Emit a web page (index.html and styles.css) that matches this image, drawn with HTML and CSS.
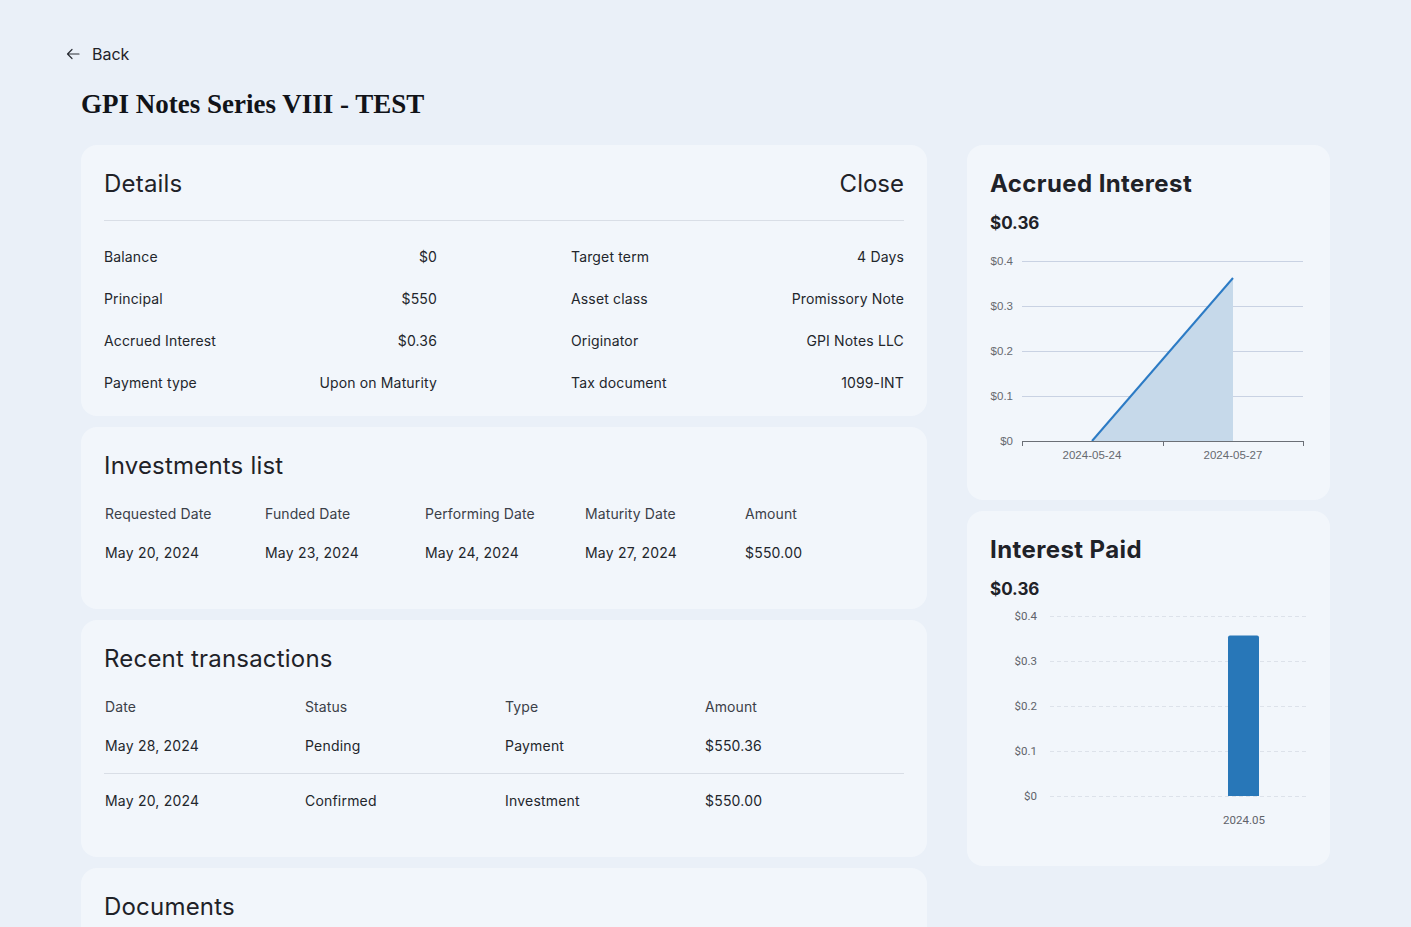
FILE: index.html
```html
<!DOCTYPE html>
<html>
<head>
<meta charset="utf-8">
<link rel="stylesheet" href="styles.css">
</head>
<body>
<div class="page">
  <a class="back" href="#">
    <svg class="back-icon" width="14" height="12" viewBox="0 0 14 12"><path d="M13 6H1.5M6 1.5L1.5 6L6 10.5" fill="none" stroke="#2a2e35" stroke-width="1.2" stroke-linecap="round" stroke-linejoin="round"/></svg>
    <span>Back</span>
  </a>
  <h1 class="title">GPI Notes Series VIII - TEST</h1>
  <div class="layout">
    <div class="main-col">
      <section class="card details">
        <div class="details-head">
          <h2 class="card-title">Details</h2>
          <span class="close">Close</span>
        </div>
        <div class="details-grid">
          <div class="kv"><span>Balance</span><span>$0</span></div>
          <div class="kv"><span>Target term</span><span>4 Days</span></div>
          <div class="kv"><span>Principal</span><span>$550</span></div>
          <div class="kv"><span>Asset class</span><span>Promissory Note</span></div>
          <div class="kv"><span>Accrued Interest</span><span>$0.36</span></div>
          <div class="kv"><span>Originator</span><span>GPI Notes LLC</span></div>
          <div class="kv"><span>Payment type</span><span>Upon on Maturity</span></div>
          <div class="kv"><span>Tax document</span><span>1099-INT</span></div>
        </div>
      </section>

      <section class="card list">
        <h2 class="card-title">Investments list</h2>
        <div class="table inv">
          <div class="tr th"><span>Requested Date</span><span>Funded Date</span><span>Performing Date</span><span>Maturity Date</span><span>Amount</span></div>
          <div class="tr"><span>May 20, 2024</span><span>May 23, 2024</span><span>May 24, 2024</span><span>May 27, 2024</span><span>$550.00</span></div>
        </div>
      </section>

      <section class="card list">
        <h2 class="card-title">Recent transactions</h2>
        <div class="table tx">
          <div class="tr th"><span>Date</span><span>Status</span><span>Type</span><span>Amount</span></div>
          <div class="tr"><span>May 28, 2024</span><span>Pending</span><span>Payment</span><span>$550.36</span></div>
          <div class="tr sep"><span>May 20, 2024</span><span>Confirmed</span><span>Investment</span><span>$550.00</span></div>
        </div>
      </section>

      <section class="card list">
        <h2 class="card-title">Documents</h2>
      </section>
    </div>

    <div class="side-col">
      <section class="card chart-card">
        <h3 class="chart-title">Accrued Interest</h3>
        <div class="chart-value">$0.36</div>
        <svg class="chart" width="317" height="229" viewBox="0 0 317 229">
          <g stroke="#c9d2e3" stroke-width="1">
            <line x1="32" y1="10.5" x2="313" y2="10.5"/>
            <line x1="32" y1="55.5" x2="313" y2="55.5"/>
            <line x1="32" y1="100.5" x2="313" y2="100.5"/>
            <line x1="32" y1="145.5" x2="313" y2="145.5"/>
          </g>
          <polygon points="102,190 243,27 243,190" fill="#c6d9ea"/>
          <line x1="102" y1="190" x2="243" y2="27" stroke="#2c7bc5" stroke-width="2"/>
          <g stroke="#6b6f76" stroke-width="1">
            <line x1="32" y1="190.5" x2="313" y2="190.5"/>
            <line x1="32.5" y1="190" x2="32.5" y2="195"/>
            <line x1="173.5" y1="190" x2="173.5" y2="195"/>
            <line x1="313.5" y1="190" x2="313.5" y2="195"/>
          </g>
          <g class="axis-l" text-anchor="end">
            <text x="23" y="14">$0.4</text>
            <text x="23" y="59">$0.3</text>
            <text x="23" y="104">$0.2</text>
            <text x="23" y="149">$0.1</text>
            <text x="23" y="194">$0</text>
          </g>
          <g class="axis-l" text-anchor="middle">
            <text x="102" y="208">2024-05-24</text>
            <text x="243" y="208">2024-05-27</text>
          </g>
        </svg>
      </section>

      <section class="card chart-card">
        <h3 class="chart-title">Interest Paid</h3>
        <div class="chart-value">$0.36</div>
        <svg class="chart" width="317" height="245" viewBox="0 0 317 245">
          <g stroke="#dde2ea" stroke-width="1" stroke-dasharray="4 3">
            <line x1="60" y1="15.5" x2="317" y2="15.5"/>
            <line x1="60" y1="60.5" x2="317" y2="60.5"/>
            <line x1="60" y1="105.5" x2="317" y2="105.5"/>
            <line x1="60" y1="150.5" x2="317" y2="150.5"/>
            <line x1="60" y1="195.5" x2="317" y2="195.5"/>
          </g>
          <path d="M238 195V36.5a2 2 0 0 1 2-2h27a2 2 0 0 1 2 2V195Z" fill="#2877b8"/>
          <g class="axis-r" text-anchor="end">
            <text x="47" y="19">$0.4</text>
            <text x="47" y="64">$0.3</text>
            <text x="47" y="109">$0.2</text>
            <text x="47" y="154">$0.1</text>
            <text x="47" y="199">$0</text>
          </g>
          <text class="axis-r" x="254" y="223" text-anchor="middle">2024.05</text>
        </svg>
      </section>
    </div>
  </div>
</div>
</body>
</html>
```

FILE: styles.css
```css
* { box-sizing: border-box; }
html, body { margin: 0; padding: 0; }
body {
  background: #eaf0f8;
  font-family: Inter, "Noto Sans", sans-serif;
  color: #1f2228;
  height: 927px;
  overflow: hidden;
}
.page {
  padding: 44px 0 0 81px;
}
.back {
  display: inline-flex;
  align-items: center;
  gap: 12px;
  margin-left: -15px;
  text-decoration: none;
  color: #1f2228;
  font-size: 16px;
  line-height: 20px;
}
.back-icon { display: block; }
.title {
  margin: 24px 0 0 0;
  font-family: "Liberation Serif", "DejaVu Serif", serif;
  font-weight: 700;
  font-size: 27px;
  line-height: 32px;
  letter-spacing: 0;
  color: #111318;
}
.layout {
  display: flex;
  gap: 40px;
  margin-top: 25px;
  align-items: flex-start;
}
.main-col {
  width: 846px;
  display: flex;
  flex-direction: column;
  gap: 11px;
}
.side-col {
  width: 363px;
  display: flex;
  flex-direction: column;
  gap: 11px;
}
.card {
  background: #f2f6fb;
  border-radius: 16px;
  padding: 23px;
}
.card-title {
  margin: 0;
  font-size: 24px;
  font-weight: 400;
  line-height: 32px;
  letter-spacing: 0.2px;
  color: #1f2228;
}
.details-head {
  display: flex;
  justify-content: space-between;
  align-items: center;
  padding-bottom: 20px;
  border-bottom: 1px solid #d9dee6;
}
.close {
  font-size: 24px;
  line-height: 32px;
  color: #1f2228;
}
.details-grid {
  display: grid;
  grid-template-columns: 333px 333px;
  column-gap: 134px;
  row-gap: 22px;
  padding-top: 26px;
}
.kv {
  display: flex;
  justify-content: space-between;
  font-size: 14px;
  line-height: 20px;
  letter-spacing: 0.15px;
  color: #23262c;
}
.table { margin-top: 22px; }
.tr {
  display: grid;
  font-size: 14px;
  line-height: 20px;
  letter-spacing: 0.2px;
  color: #23262c;
  padding-left: 1px;
}
.inv .tr { grid-template-columns: repeat(5, 160px); }
.tx .tr { grid-template-columns: repeat(4, 200px); }
.tr.th { color: #3b4048; letter-spacing: 0.1px; }
.inv .tr + .tr { margin-top: 19px; }
.tx .tr + .tr { margin-top: 19px; }
.tx .tr.sep {
  margin-top: 17px;
  border-top: 1px solid #d9dee6;
  padding-top: 17px;
}
.list { padding-bottom: 46px; }
.chart-card { padding: 23px 23px 20px; }
.chart-title {
  margin: 0;
  font-size: 24px;
  font-weight: 700;
  line-height: 32px;
  letter-spacing: 0.4px;
  color: #1f2228;
}
.chart-value {
  margin-top: 11px;
  font-size: 17px;
  font-weight: 700;
  line-height: 24px;
  color: #1f2228;
}
.chart { display: block; margin-top: 16px; }
.chart-card + .chart-card .chart { margin-top: 0; }
.axis-l {
  font-family: "Liberation Sans", Arial, sans-serif;
  font-size: 11.5px;
  fill: #66696f;
}
.axis-r {
  font-family: Roboto, "Liberation Sans", sans-serif;
  font-size: 11.5px;
  fill: #5f636a;
}
```
